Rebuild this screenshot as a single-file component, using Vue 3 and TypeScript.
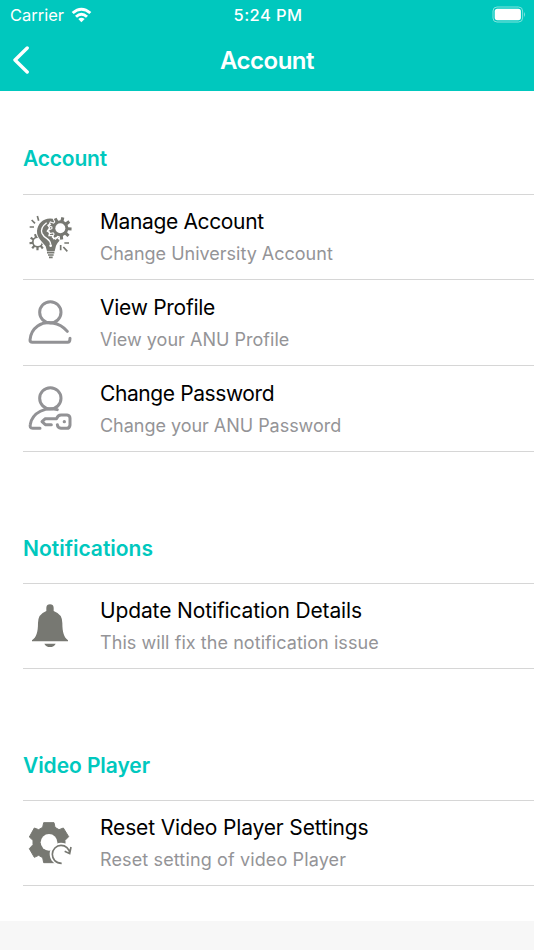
<script setup lang="ts">
interface Item {
  icon: string
  title: string
  detail: string
  titleTracking: number
  detailTracking: number
}
interface Section {
  heading: string
  tracking: number
  items: Item[]
}

const sections: Section[] = [
  {
    heading: 'Account',
    tracking: -0.2,
    items: [
      { icon: 'idea', title: 'Manage Account', detail: 'Change University Account', titleTracking: -0.36, detailTracking: 0 },
      { icon: 'profile', title: 'View Profile', detail: 'View your ANU Profile', titleTracking: -0.27, detailTracking: 0.02 },
      { icon: 'password', title: 'Change Password', detail: 'Change your ANU Password', titleTracking: -0.4, detailTracking: -0.03 },
    ],
  },
  {
    heading: 'Notifications',
    tracking: 0,
    items: [
      { icon: 'bell', title: 'Update Notification Details', detail: 'This will fix the notification issue', titleTracking: -0.13, detailTracking: 0.06 },
    ],
  },
  {
    heading: 'Video Player',
    tracking: -0.08,
    items: [
      { icon: 'reset', title: 'Reset Video Player Settings', detail: 'Reset setting of video Player', titleTracking: -0.15, detailTracking: 0.13 },
    ],
  },
]

function gear(cx: number, cy: number, outer: number, inner: number, teeth: number, turn = 0): string {
  const step = (Math.PI * 2) / teeth
  const points: string[] = []
  for (let i = 0; i < teeth; i++) {
    const a = i * step + turn
    const corners: [number, number][] = [
      [inner, -0.29],
      [outer, -0.19],
      [outer, 0.19],
      [inner, 0.29],
    ]
    for (const [r, k] of corners) {
      points.push(`${(cx + r * Math.cos(a + k * step)).toFixed(1)} ${(cy + r * Math.sin(a + k * step)).toFixed(1)}`)
    }
  }
  return `M${points.join('L')}Z`
}
</script>

<template>
  <div class="screen">
    <header class="top">
      <div class="status">
        <div class="carrier">
          <span>Carrier</span>
          <svg class="wifi" viewBox="0 0 63 48">
            <path d="M2 15Q31-11 61 15L55 21Q31 1 8 21Z" />
            <path d="M12 26Q31 9 51 26L45 32Q31 20 18 32Z" />
            <path d="M22 36Q31 28 41 36L31 46Z" />
          </svg>
        </div>
        <span class="time">5:24 PM</span>
        <svg class="battery" viewBox="0 0 34 18">
          <rect x="1" y="1" width="29.6" height="15" rx="4" class="shell" />
          <rect x="2.7" y="2.8" width="26.2" height="11.4" rx="2.6" class="charge" />
          <path d="M32 6Q34 8.5 32 11Z" class="charge tip" />
        </svg>
      </div>
      <nav class="nav">
        <svg class="back" viewBox="0 0 18 28"><path d="M15.2 2L3 14L15.2 26" /></svg>
        <h1>Account</h1>
      </nav>
    </header>

    <main>
      <section v-for="s in sections" :key="s.heading">
        <h2 :style="{ letterSpacing: s.tracking + 'px' }">{{ s.heading }}</h2>
        <ul>
          <li v-for="item in s.items" :key="item.title">
            <svg v-if="item.icon === 'idea'" class="icon" viewBox="0 0 180 180">
              <path class="fill" :d="gear(53, 111, 25, 17, 9, 0.2)" />
              <circle class="paper" cx="53" cy="111" r="12" />
              <path class="fill edge" d="M106 43C76 34 54 51 51 78C50 99 66 108 77 124L81 139H104L108 122Q112 114 122 103L94 74Z" />
              <path class="fill edge" :d="gear(121, 70, 34, 24, 9, 0.05)" />
              <circle class="paper" cx="121" cy="70" r="15" />
              <path class="cut" d="M80 53Q60 68 66 85Q71 95 81 101Q91 108 92 118" />
              <path class="cut" d="M93 57L84 61L89 69L82 78L89 83L87 92L98 92L101 101L112 97L118 103" />
              <circle class="paper" cx="92" cy="122" r="4" />
              <path class="ray" d="M52 33L56 47M35 45L45 55M29 66H42M133 114H147M122 120V136M130 126L142 139" />
              <path class="base" d="M81 143H103M84 150H101M87 157H98" />
            </svg>
            <svg v-else-if="item.icon === 'profile'" class="icon person" viewBox="0 0 180 180">
              <g class="line">
                <circle cx="91" cy="67" r="32" />
                <path d="M142 124C118 95 78 91 53 108Q32 123 30 150Q30 157 37 157H143Q150 157 150 145" />
              </g>
            </svg>
            <svg v-else-if="item.icon === 'password'" class="icon person" viewBox="0 0 180 180">
              <g class="line">
                <circle cx="91" cy="67" r="32" />
                <path d="M112 101C78 91 37 109 31 145Q28 157 38 157H60" />
                <path d="M94 146H76L66 137L76 128H110Q113 117 123 117H141Q150 118 150 127V147Q149 157 140 157H123Q113 156 112 146" />
              </g>
              <circle class="pin" cx="133" cy="137" r="5" />
            </svg>
            <svg v-else-if="item.icon === 'bell'" class="icon bell" viewBox="0 0 180 180">
              <path class="fill" d="M79 48V38Q80 28 90 28Q100 28 101 38V48Q127 57 127 84C127 112 132 127 144 136V139H36V136C49 127 54 112 54 84Q54 57 79 48ZM73 146H107Q102 156 90 156Q78 156 73 146Z" />
            </svg>
            <svg v-else class="icon reset" viewBox="0 0 180 180">
              <path class="fill round" d="M71 38H102L105 52L117 59L130 54L146 80L135 91V103L142 110L125 151L104 146V158H71L68 143L56 136L43 142L28 116L39 104V91L28 81L43 54L56 59L68 52Z" />
              <circle class="paper" cx="87" cy="97" r="25" />
              <circle class="paper" cx="123" cy="132" r="34" />
              <path class="turn" d="M125 160C107 160 97 147 97 133C97 118 109 106 123 106C137 106 148 116 149 130M134 124L149 131L153 111" />
            </svg>
            <div class="copy">
              <div class="title" :style="{ letterSpacing: item.titleTracking + 'px' }">{{ item.title }}</div>
              <div class="detail" :style="{ letterSpacing: item.detailTracking + 'px' }">{{ item.detail }}</div>
            </div>
          </li>
        </ul>
      </section>
    </main>
    <footer />
  </div>
</template>

<style>
body {
  margin: 0;
  background: #fff;
}
</style>

<style scoped>
.screen {
  width: 534px;
  height: 950px;
  overflow: hidden;
  display: flex;
  flex-direction: column;
  background: #fff;
  font-family: Inter, "Liberation Sans", sans-serif;
}
.top {
  height: 91px;
  flex: none;
  background: #00c8be;
  color: #fff;
}
.status {
  display: grid;
  grid-template-columns: 1fr auto 1fr;
  height: 30px;
  align-items: center;
  padding: 0 8px 0 10px;
}
.carrier {
  display: flex;
  align-items: center;
  gap: 7px;
  font-size: 16.5px;
}
.wifi {
  width: 21px;
  height: 16px;
  margin-top: -1px;
  fill: #fff;
}
.time {
  font-size: 16.5px;
  font-weight: 500;
  letter-spacing: 0.4px;
}
.battery {
  width: 34px;
  height: 18px;
  margin-top: -1px;
  justify-self: end;
}
.shell {
  fill: none;
  stroke: #80e4de;
}
.charge {
  fill: #fff;
}
.tip {
  opacity: 0.5;
}
.nav {
  display: grid;
  grid-template-columns: 1fr auto 1fr;
  height: 60px;
  align-items: center;
  padding: 0 12px;
}
.back {
  width: 18px;
  height: 28px;
  fill: none;
  stroke: #fff;
  stroke-width: 3.4;
  stroke-linecap: round;
  stroke-linejoin: round;
}
h1 {
  margin: 0;
  font-size: 24px;
  font-weight: 600;
  letter-spacing: -0.5px;
}
h2 {
  box-sizing: border-box;
  height: 131px;
  margin: 0;
  padding: 82px 0 0 23px;
  font-size: 21px;
  line-height: 30px;
  font-weight: 600;
  color: #00c8be;
}
section:first-child h2 {
  height: 103px;
  padding-top: 53px;
}
ul {
  list-style: none;
  margin: 0 0 0 23px;
  padding: 0;
  border-top: 1px solid #d6d6d6;
}
li {
  box-sizing: border-box;
  height: 86px;
  padding-top: 1px;
  display: flex;
  border-bottom: 1px solid #d6d6d6;
}
li:first-child {
  height: 85px;
  padding-top: 0;
}
.icon {
  width: 60px;
  height: 60px;
  margin: 10px 0 0 -3px;
  flex: none;
}
.person,
.reset {
  margin-top: 9px;
}
.bell {
  margin-top: 11px;
}
.copy {
  margin: 12px 0 0 20px;
  white-space: nowrap;
}
.title {
  font-size: 21px;
  line-height: 30px;
  color: #000;
}
.detail {
  margin-top: 3px;
  font-size: 18px;
  line-height: 28px;
  color: #949497;
}
.fill {
  fill: #777872;
}
.edge {
  stroke: #fff;
  stroke-width: 6;
  paint-order: stroke;
}
.round {
  stroke: #777872;
  stroke-width: 3;
  stroke-linejoin: round;
}
.paper {
  fill: #fff;
}
.cut {
  fill: none;
  stroke: #fff;
  stroke-width: 4;
}
.ray,
.base {
  fill: none;
  stroke: #777872;
  stroke-width: 5;
}
.line {
  fill: none;
  stroke: #929295;
  stroke-width: 9;
  stroke-linecap: round;
  stroke-linejoin: round;
}
.pin {
  fill: #929295;
}
.turn {
  fill: none;
  stroke: #777872;
  stroke-width: 5;
}
footer {
  margin-top: auto;
  height: 29px;
  flex: none;
  background: #f7f7f7;
}
</style>
